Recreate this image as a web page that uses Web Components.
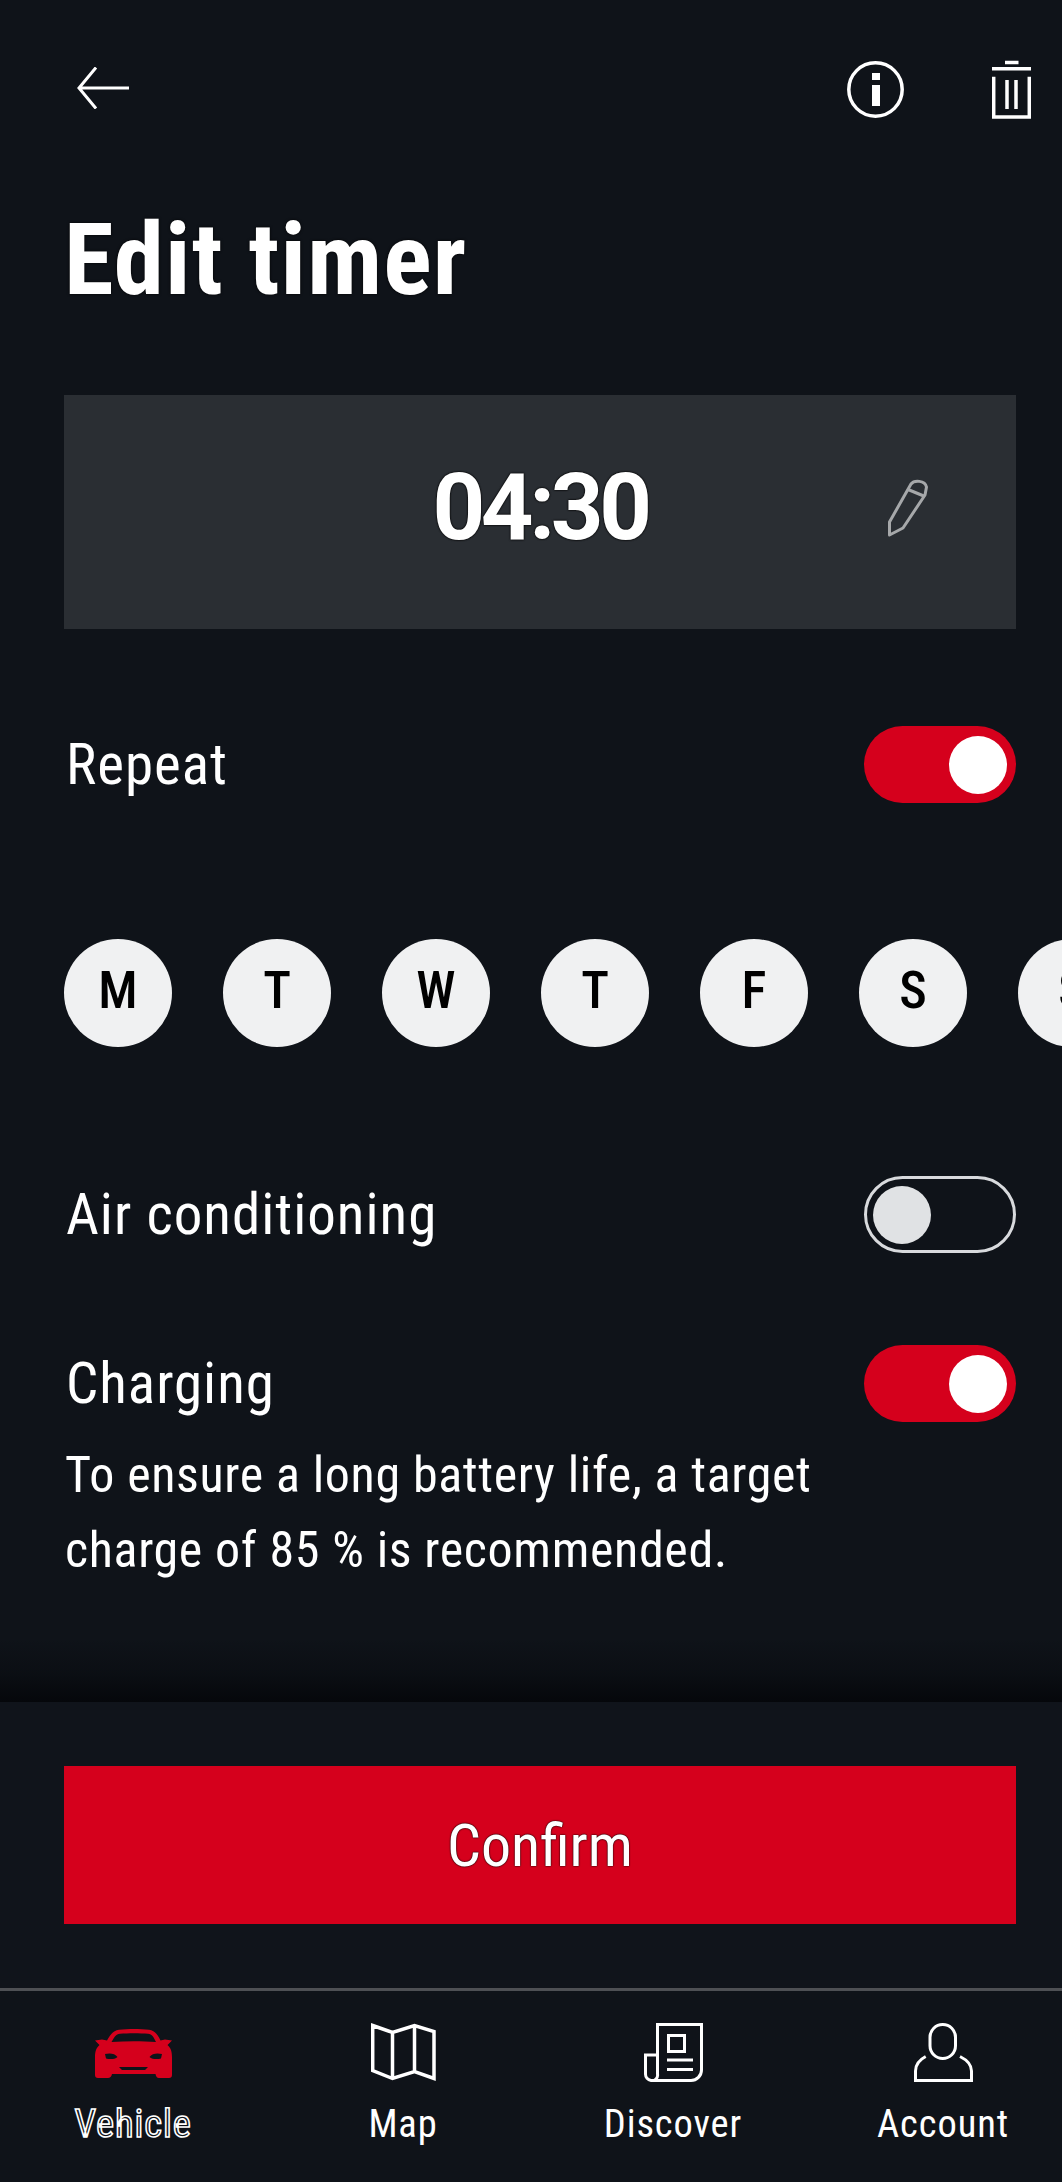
<!DOCTYPE html>
<html lang="en">
<head>
<meta charset="utf-8">
<title>Edit timer</title>
<style>
    html, body {
        margin: 0;
        background: #0f1319;
        color: #fff;
        font-family: Roboto, "Liberation Sans", sans-serif;
    }
    body {
        height: 2182px;
        overflow: hidden;
    }
</style>
</head>
<body>
<timer-app>
    <timer-header slot="header"></timer-header>
    <time-panel slot="time">04:30</time-panel>
    <toggle-row slot="repeat" on>Repeat</toggle-row>
    <day-picker slot="days">
        <day-chip>M</day-chip>
        <day-chip>T</day-chip>
        <day-chip>W</day-chip>
        <day-chip>T</day-chip>
        <day-chip>F</day-chip>
        <day-chip>S</day-chip>
        <day-chip>S</day-chip>
    </day-picker>
    <toggle-row slot="air">Air conditioning</toggle-row>
    <toggle-row slot="charging" on>
        Charging
        <span slot="note">To ensure a long battery life, a target<br>charge of 85 % is recommended.</span>
    </toggle-row>
    <action-footer slot="footer">Confirm</action-footer>
    <tab-bar slot="tabs">
        <tab-item icon="vehicle" active>Vehicle</tab-item>
        <tab-item icon="map">Map</tab-item>
        <tab-item icon="discover">Discover</tab-item>
        <tab-item icon="account">Account</tab-item>
    </tab-bar>
</timer-app>

<script>
class TimerApp extends HTMLElement {
    constructor() {
        super();
        this.attachShadow({ mode: 'open' });
    }

    connectedCallback() {
        this.shadowRoot.innerHTML = `
            <style>
                :host { display: block; height: 2182px; overflow: hidden; }
                .body { height: 1702px; display: flex; flex-direction: column; }
                h1 {
                    margin: 91px 0 -2px 64px;
                    font-size: 101px;
                    line-height: 100px;
                    font-weight: 700;
                    font-stretch: 75%;
                    letter-spacing: 1.2px;
                    text-shadow: 0 0 3px #000;
                }
                .time { display: block; margin: 87px 46px 0 64px; }
                .repeat { margin-top: 97px; }
                .days { margin-top: 136px; }
                .air { margin-top: 129px; }
                .charging { margin-top: 92px; }
                .shade {
                    margin-top: auto;
                    height: 64px;
                    background: linear-gradient(to bottom, rgba(4, 6, 10, 0), rgba(4, 6, 10, 0.35) 55%, #05070b);
                }
            </style>
            <div class="body">
                <slot name="header"></slot>
                <h1>Edit timer</h1>
                <div class="time"><slot name="time"></slot></div>
                <div class="repeat"><slot name="repeat"></slot></div>
                <div class="days"><slot name="days"></slot></div>
                <div class="air"><slot name="air"></slot></div>
                <div class="charging"><slot name="charging"></slot></div>
                <div class="shade"></div>
            </div>
            <slot name="footer"></slot>
            <slot name="tabs"></slot>
        `;
    }
}

class TimerHeader extends HTMLElement {
    constructor() {
        super();
        this.attachShadow({ mode: 'open' });
    }

    connectedCallback() {
        this.shadowRoot.innerHTML = `
            <style>
                :host {
                    display: flex;
                    justify-content: space-between;
                    align-items: flex-start;
                    padding: 60px 31px 0 77px;
                }
                .back { margin-top: 7px; }
                .actions { display: flex; gap: 88px; align-items: flex-start; }
                .info { margin-top: 1px; }
                svg { display: block; fill: none; stroke: #fff; }
            </style>
            <svg class="back" width="52" height="42" viewBox="0 0 52 42" stroke-width="3">
                <path d="M52 21H2M19 0.5L2 21l17 20.5"/>
            </svg>
            <div class="actions">
                <svg class="info" width="57" height="57" viewBox="0 0 57 57" stroke-width="3.5">
                    <circle cx="28.5" cy="28.5" r="26.7"/>
                    <rect x="25" y="12" width="8" height="7" fill="#fff" stroke="none"/>
                    <rect x="25" y="24" width="8" height="21" fill="#fff" stroke="none"/>
                </svg>
                <svg width="39" height="59" viewBox="0 0 39 59" stroke-width="3.5">
                    <path d="M13 2.5H26.5M0 8.7H39M1.7 16.7V57H37.3V16.7"/>
                    <path d="M15 20V49M24 20V49"/>
                </svg>
            </div>
        `;
    }
}

class TimePanel extends HTMLElement {
    constructor() {
        super();
        this.attachShadow({ mode: 'open' });
    }

    connectedCallback() {
        this.shadowRoot.innerHTML = `
            <style>
                :host {
                    display: grid;
                    grid-template-columns: 1fr auto 1fr;
                    align-items: center;
                    height: 226px;
                    padding-bottom: 8px;
                    background: #2a2e33;
                }
                .value {
                    grid-column: 2;
                    font-size: 92px;
                    line-height: 90px;
                    font-weight: 700;
                    letter-spacing: -4.4px;
                    text-shadow: 0 0 2px #000, 0 0 2px #000;
                }
                svg {
                    grid-column: 3;
                    justify-self: end;
                    margin-right: 88px;
                    fill: none;
                    stroke: #a6a8aa;
                    stroke-width: 3;
                    stroke-linejoin: round;
                }
            </style>
            <div class="value"><slot></slot></div>
            <svg width="40" height="58" viewBox="0 0 40 58">
                <path d="M1.5 56V43L23 5C26 1 37 1 38.5 8L37 16 15 49z"/>
                <path d="M20 10.5L37 17.5"/>
            </svg>
        `;
    }
}

class ToggleRow extends HTMLElement {
    constructor() {
        super();
        this.attachShadow({ mode: 'open' });
    }

    connectedCallback() {
        const on = this.hasAttribute('on');
        this.shadowRoot.innerHTML = `
            <style>
                :host { display: block; padding: 0 46px 0 64px; }
                .row { display: flex; justify-content: space-between; align-items: center; }
                .label {
                    font-size: 57px;
                    line-height: 77px;
                    font-stretch: 75%;
                    letter-spacing: 1px;
                    margin-left: 2px;
                }
                .switch {
                    box-sizing: border-box;
                    width: 152px;
                    height: 77px;
                    border-radius: 39px;
                    display: flex;
                    align-items: center;
                    padding: 0 9px;
                }
                .switch.on { background: #d5001c; justify-content: flex-end; }
                .switch.off { border: 3px solid #d8dadd; padding: 0 6px; }
                .knob { width: 58px; height: 58px; border-radius: 50%; background: #fff; }
                .off .knob { background: #e0e2e4; }
                ::slotted([slot="note"]) {
                    display: block;
                    margin: 16px 0 0 1px;
                    font-size: 50px;
                    line-height: 75px;
                    font-stretch: 75%;
                    letter-spacing: 0.65px;
                }
            </style>
            <div class="row">
                <div class="label"><slot></slot></div>
                <div class="switch ${on ? 'on' : 'off'}"><div class="knob"></div></div>
            </div>
            <slot name="note"></slot>
        `;
    }
}

class DayPicker extends HTMLElement {
    constructor() {
        super();
        this.attachShadow({ mode: 'open' });
    }

    connectedCallback() {
        this.shadowRoot.innerHTML = `
            <style>
                :host { display: flex; gap: 51px; padding-left: 64px; overflow: hidden; }
            </style>
            <slot></slot>
        `;
    }
}

class DayChip extends HTMLElement {
    constructor() {
        super();
        this.attachShadow({ mode: 'open' });
    }

    connectedCallback() {
        this.shadowRoot.innerHTML = `
            <style>
                :host {
                    flex: none;
                    box-sizing: border-box;
                    width: 108px;
                    height: 108px;
                    padding-bottom: 6px;
                    border-radius: 50%;
                    background: #f0f1f2;
                    color: #000;
                    display: flex;
                    align-items: center;
                    justify-content: center;
                    font-size: 52px;
                    font-weight: 500;
                    font-stretch: 75%;
                }
            </style>
            <slot></slot>
        `;
    }
}

class ActionFooter extends HTMLElement {
    constructor() {
        super();
        this.attachShadow({ mode: 'open' });
    }

    connectedCallback() {
        this.shadowRoot.innerHTML = `
            <style>
                :host {
                    display: block;
                    box-sizing: border-box;
                    height: 286px;
                    padding: 64px 46px 64px 64px;
                    background: #10141b;
                }
                .btn {
                    height: 158px;
                    background: #d5001c;
                    display: flex;
                    align-items: center;
                    justify-content: center;
                    font-size: 60px;
                    font-stretch: 75%;
                    text-shadow: 0 0 2px #000, 0 0 1px #000;
                }
            </style>
            <div class="btn"><slot></slot></div>
        `;
    }
}

class TabBar extends HTMLElement {
    constructor() {
        super();
        this.attachShadow({ mode: 'open' });
    }

    connectedCallback() {
        this.shadowRoot.innerHTML = `
            <style>
                :host {
                    display: grid;
                    grid-template-columns: repeat(4, 270px);
                    box-sizing: border-box;
                    height: 194px;
                    margin-left: -2px;
                    padding-top: 32px;
                    border-top: 3px solid #4e5054;
                }
            </style>
            <slot></slot>
        `;
    }
}

const TAB_ICONS = {
    vehicle: `
        <svg width="77" height="49" viewBox="0 0 77 49" fill="#d5001c" style="margin-top:6px">
            <path d="M0 11.5L7 10.5 12 11.5C15 6 18 1.5 24 .8 33-.2 45-.2 54 .8 60 1.5 63 6 65.5 11.5L70 10.5 77 11.5 72.5 16C76 19 77 23 77 28V46C77 48 76 49 74 49H64C62 49 61 47.5 60.5 45H17C16.5 47.5 15 49 13 49H3C1 49 0 48 0 46V28C0 23 1 19 4.5 16z"/>
            <path fill="#0f1319" d="M16.5 13C19 8.5 21 5 25 4.7 33 4 45 4 53 4.7 57 5 59 8.5 61 13 47 12 31 12 16.5 13z"/>
            <path fill="#0f1319" d="M10 25C14 24 20 24 22.5 28 20 30.5 14 30.5 11 29.5zM67 25C63 24 57 24 54.5 28 57 30.5 63 30.5 66 29.5zM24 38H53L50 41H27z"/>
        </svg>`,
    map: `
        <svg width="65" height="58" viewBox="0 0 65 58" fill="none" stroke="#fff" stroke-width="3.5">
            <path d="M1.7 2.5L21.5 9.5 43.5 2.5 63 8.5V55.5L43.5 48.5 21.5 55.5 1.7 47.5zM21.5 9.5V55.5M43.5 2.5V48.5"/>
        </svg>`,
    discover: `
        <svg width="59" height="59" viewBox="0 0 59 59" fill="none" stroke="#fff" stroke-width="3">
            <path d="M13.5 32V1.5H57.5V47A10.5 10.5 0 0 1 47 57.5H7A5.5 5.5 0 0 0 13.5 51V32H1.5V51A6.5 6.5 0 0 0 7 57.5"/>
            <rect x="24.5" y="12.5" width="16" height="16"/>
            <path d="M23 37H49M23 46.5H49"/>
        </svg>`,
    account: `
        <svg width="59" height="59" viewBox="0 0 59 59" fill="none" stroke="#fff" stroke-width="3">
            <rect x="16" y="1.5" width="25.5" height="34" rx="12.7"/>
            <path d="M11.7 33.5C5 37 1.5 42 1.5 48V57.5H57.5V48C57.5 42 53 37 46 33.5"/>
        </svg>`,
};

class TabItem extends HTMLElement {
    constructor() {
        super();
        this.attachShadow({ mode: 'open' });
    }

    connectedCallback() {
        const icon = this.getAttribute('icon');
        const active = this.hasAttribute('active');
        this.shadowRoot.innerHTML = `
            <style>
                :host { display: flex; flex-direction: column; align-items: center; }
                .icon { height: 60px; }
                svg { display: block; }
                .label {
                    margin-top: 16px;
                    font-size: 38.5px;
                    line-height: 50px;
                    font-stretch: 75%;
                    letter-spacing: 0.9px;
                }
                .label.active {
                    color: #0f1319;
                    -webkit-text-stroke: 1.6px #fff;
                }
            </style>
            <div class="icon">${TAB_ICONS[icon] || ''}</div>
            <div class="label ${active ? 'active' : ''}"><slot></slot></div>
        `;
    }
}

customElements.define('timer-app', TimerApp);
customElements.define('timer-header', TimerHeader);
customElements.define('time-panel', TimePanel);
customElements.define('toggle-row', ToggleRow);
customElements.define('day-picker', DayPicker);
customElements.define('day-chip', DayChip);
customElements.define('action-footer', ActionFooter);
customElements.define('tab-bar', TabBar);
customElements.define('tab-item', TabItem);
</script>
</body>
</html>
